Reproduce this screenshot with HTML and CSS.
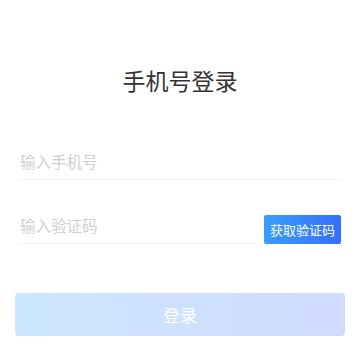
FILE: index.html
```html
<!DOCTYPE html>
<html>
<head>
    <meta charset="UTF-8">
    <title>手机号登录</title>
    <meta name="viewport" content="width=device-width, initial-scale=1.0">
    <link rel="stylesheet" href="styles.css">
</head>
<body>
    <div class="page">
        <h1 class="title">手机号登录</h1>

        <div class="form">
            <div class="row">
                <input type="text" class="field" placeholder="输入手机号">
            </div>
            <div class="row code-row">
                <input type="text" class="field" placeholder="输入验证码">
                <button class="code-btn">获取验证码</button>
            </div>
        </div>

        <button class="login-btn">登录</button>
    </div>
</body>
</html>
```

FILE: styles.css
```css
body {
    margin: 0;
    background: #fff;
    font-family: "Noto Sans CJK SC", "Noto Sans", sans-serif;
}
.page {
    padding: 64px 15px 0;
}
.title {
    margin: 0;
    font-size: 23px;
    line-height: 32px;
    font-weight: 400;
    color: #333;
    text-align: center;
}
.form {
    margin: 47px 4px 0;
}
.row {
    display: flex;
    align-items: flex-end;
    gap: 8px;
}
.code-row {
    margin-top: 27px;
}
.field {
    flex: 1;
    min-width: 0;
    height: 36px;
    padding: 0 1px;
    border: none;
    border-bottom: 1px solid #f2f2f2;
    outline: none;
    font-family: inherit;
    font-size: 15.5px;
    color: #333;
    background: transparent;
}
.field::placeholder {
    color: #cfcfcf;
}
.code-btn {
    width: 77px;
    height: 29px;
    padding: 0;
    border: none;
    border-radius: 2px;
    background: linear-gradient(90deg, #3a9dfc, #3470ff);
    color: #fff;
    font-family: inherit;
    font-size: 13px;
}
.login-btn {
    display: block;
    width: 100%;
    height: 43px;
    margin-top: 49px;
    border: none;
    border-radius: 4px;
    background: linear-gradient(90deg, #cde7ff, #cfdaff);
    color: #fff;
    font-family: inherit;
    font-size: 17px;
}
```
